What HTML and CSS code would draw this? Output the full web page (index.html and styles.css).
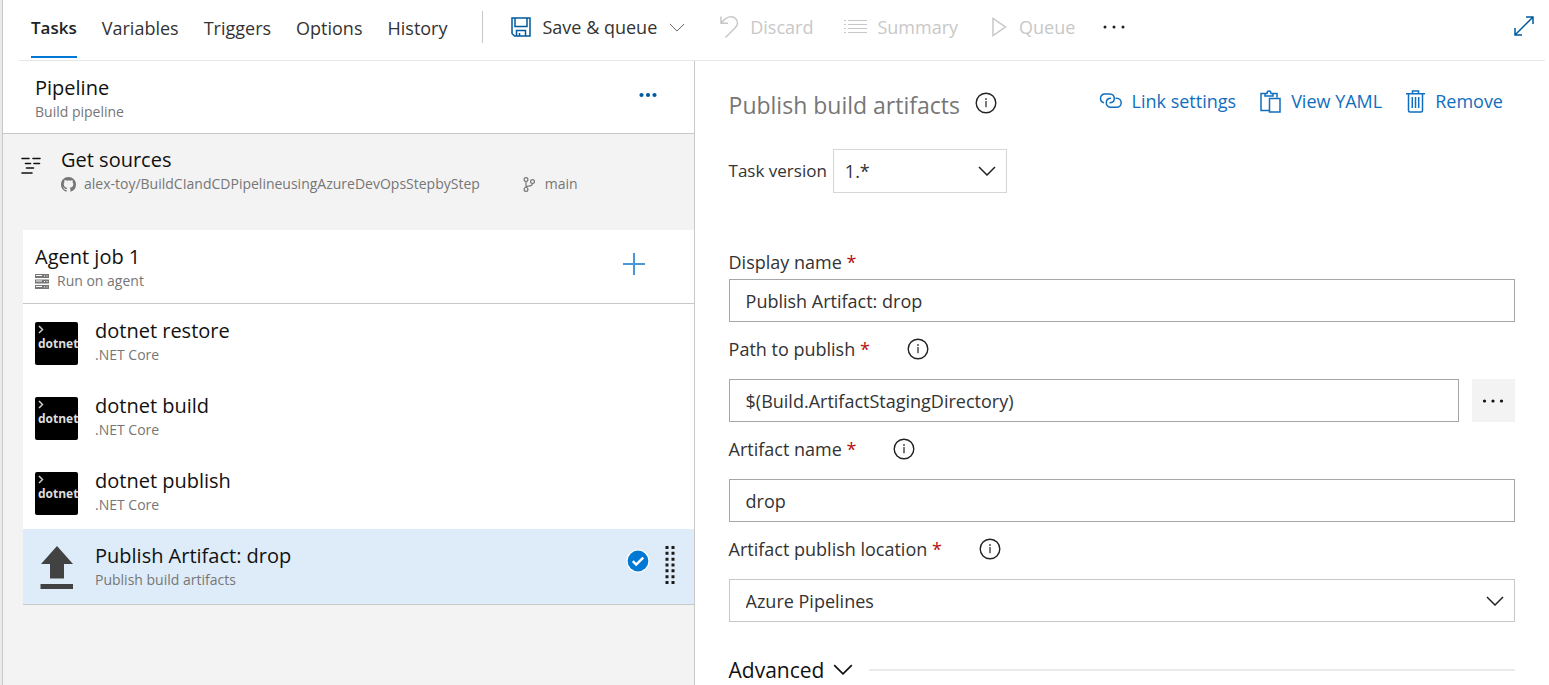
FILE: index.html
```html
<!DOCTYPE html>
<html lang="en">
<head>
<meta charset="utf-8">
<title>Build pipeline - Tasks</title>
<link rel="stylesheet" href="styles.css">
</head>
<body>
<svg class="defs" aria-hidden="true">
  <symbol id="chevron" viewBox="0 0 18 10"><path d="M1 1l8 8 8-8" fill="none" stroke="currentColor"/></symbol>
  <symbol id="info" viewBox="0 0 22 22"><circle cx="11" cy="11" r="9.8" fill="none" stroke="currentColor" stroke-width="1.4"/><path d="M10.4 9h1.200v6.300h-1.200zM10.200 6.200h1.600v1.500h-1.600z" fill="currentColor"/></symbol>
</svg>
<div class="app">
  <header class="topbar">
    <nav class="tabs">
      <a class="tab tab-active" href="#tasks">Tasks</a>
      <a class="tab" href="#variables">Variables</a>
      <a class="tab" href="#triggers">Triggers</a>
      <a class="tab" href="#options">Options</a>
      <a class="tab" href="#history">History</a>
    </nav>
    <div class="toolbar">
      <button class="tool save" type="button">
        <svg class="blue-dark" width="20" height="20" viewBox="0 0 20 20" fill="none" stroke="currentColor" stroke-width="1.5"><path d="M1 1h18v18H3.500L1 16.500z"/><path d="M4 1v8.500h12V1M5.500 19v-5.500h9V19M8.500 19v-3"/></svg>
        <span>Save &amp; queue</span>
        <svg class="thin-chevron" width="16" height="9"><use href="#chevron"/></svg>
      </button>
      <button class="tool discard" type="button" disabled>
        <svg width="20" height="24" viewBox="0 0 20 24" fill="none" stroke="currentColor" stroke-width="1.500"><path d="M2 1.500v6.800h7M2.500 8C5 4.500 8.200 1.800 12 1.800c4 0 6.500 3 6.500 6.200 0 2-1 3.500-2.500 5L6.500 22.500"/></svg>
        <span>Discard</span>
      </button>
      <button class="tool summary" type="button" disabled>
        <svg width="24" height="16" viewBox="0 0 24 16" fill="none" stroke="currentColor" stroke-width="1.200"><path d="M0 1.500h2M0 5.500h2M0 9.500h2M0 13.500h2M4 1.500h19M4 5.500h19M4 9.500h19M4 13.500h19"/></svg>
        <span>Summary</span>
      </button>
      <button class="tool queue" type="button" disabled>
        <svg width="15" height="20" viewBox="0 0 15 20" fill="none" stroke="currentColor" stroke-width="1.500"><path d="M1 1.500v17L13.500 10z"/></svg>
        <span>Queue</span>
      </button>
      <button class="tool more" type="button" aria-label="More actions">
        <svg width="22" height="4" viewBox="0 0 22 4" fill="currentColor"><circle cx="2" cy="2" r="1.500"/><circle cx="11" cy="2" r="1.500"/><circle cx="20" cy="2" r="1.500"/></svg>
      </button>
    </div>
    <button class="tool expand" type="button" aria-label="Full screen">
      <svg class="blue-dark" width="20" height="20" viewBox="0 0 20 20" fill="none" stroke="currentColor" stroke-width="1.500"><path d="M1 19L19 1M12 1h7v7M1 12v7h7"/></svg>
    </button>
  </header>
  <div class="panes">
    <section class="left">
      <div class="pipeline">
        <div>
          <h2 class="name">Pipeline</h2>
          <p class="sub">Build pipeline</p>
        </div>
        <button class="bare blue-dark" type="button" aria-label="Pipeline actions">
          <svg width="18" height="6" viewBox="0 0 18 6" fill="currentColor"><circle cx="2.500" cy="3" r="2.100"/><circle cx="9" cy="3" r="2.100"/><circle cx="15.500" cy="3" r="2.100"/></svg>
        </button>
      </div>
      <div class="sources">
        <svg class="sources-icon" width="20" height="18" viewBox="0 0 20 18" fill="none" stroke="#111" stroke-width="1.600" stroke-linecap="round"><path d="M1 1.500h7M12 1.500h7M4.500 6.500h5M13 6.500h5.500M5.500 11h7M1 16h10"/></svg>
        <div>
          <h2 class="name">Get sources</h2>
          <p class="sub source-line">
            <svg width="15" height="15" viewBox="0 0 16 16" fill="currentColor"><path d="M8 0C3.580 0 0 3.580 0 8c0 3.540 2.290 6.530 5.470 7.590.4.070.55-.17.55-.38 0-.19-.01-.82-.01-1.490-2.010.37-2.530-.49-2.690-.94-.09-.23-.48-.94-.82-1.130-.28-.15-.68-.52-.01-.53.630-.01 1.080.58 1.230.82.720 1.210 1.870.87 2.330.66.070-.52.280-.87.510-1.070-1.780-.2-3.640-.89-3.640-3.950 0-.87.310-1.590.82-2.150-.08-.2-.36-1.020.08-2.120 0 0 .67-.21 2.200.82.640-.18 1.320-.27 2-.27s1.360.09 2 .27c1.530-1.040 2.200-.82 2.200-.82.440 1.100.16 1.920.08 2.120.51.560.82 1.270.82 2.150 0 3.070-1.870 3.750-3.650 3.950.29.250.54.730.54 1.480 0 1.070-.01 1.930-.01 2.200 0 .21.150.46.550.38A8.010 8.010 0 0016 8c0-4.420-3.580-8-8-8z"/></svg>
            <span>alex-toy/BuildCIandCDPipelineusingAzureDevOpsStepbyStep</span>
            <span class="branch"><svg width="12" height="15" viewBox="0 0 12 15" fill="none" stroke="currentColor" stroke-width="1.200"><circle cx="3" cy="2.600" r="1.900"/><circle cx="3" cy="12.400" r="1.900"/><circle cx="9.500" cy="4.600" r="1.900"/><path d="M3 4.500v6M9.500 6.500C9.500 8.800 7 9 5 9.200 3.800 9.400 3 10 3 10.800"/></svg><span>main</span></span>
          </p>
        </div>
      </div>
      <div class="job-card">
        <div class="job">
          <div>
            <h2 class="name">Agent job 1</h2>
            <p class="sub agent-line">
              <svg width="14" height="15" viewBox="0 0 14 15"><path d="M0 0h14v4H0zM0 5.500h14v4H0zM0 11h14v4H0z" fill="#767676"/><path d="M1 1.500h6M1 7h6M1 12.500h6M9.500 1.500v1M12 1.500v1M9.500 7v1M12 7v1M9.500 12.500v1M12 12.500v1" stroke="#fff"/></svg>
              <span>Run on agent</span>
            </p>
          </div>
          <button class="bare add" type="button" aria-label="Add a task">
            <svg width="22" height="22" viewBox="0 0 22 22" stroke="#4c96da" stroke-width="2"><path d="M11 0v22M0 11h22"/></svg>
          </button>
        </div>
        <ul class="tasks">
          <li class="task">
            <svg class="task-icon" width="43" height="43" viewBox="0 0 43 43"><rect width="43" height="43" rx="2" fill="#000"/><path d="M4 4l3.500 3.500L4 11" fill="none" stroke="#ccc" stroke-width="1.500"/><text class="icon-text" x="3" y="26">dotnet</text></svg>
            <div><h3 class="name">dotnet restore</h3><p class="sub">.NET Core</p></div>
          </li>
          <li class="task">
            <svg class="task-icon" width="43" height="43" viewBox="0 0 43 43"><rect width="43" height="43" rx="2" fill="#000"/><path d="M4 4l3.500 3.500L4 11" fill="none" stroke="#ccc" stroke-width="1.500"/><text class="icon-text" x="3" y="26">dotnet</text></svg>
            <div><h3 class="name">dotnet build</h3><p class="sub">.NET Core</p></div>
          </li>
          <li class="task">
            <svg class="task-icon" width="43" height="43" viewBox="0 0 43 43"><rect width="43" height="43" rx="2" fill="#000"/><path d="M4 4l3.500 3.500L4 11" fill="none" stroke="#ccc" stroke-width="1.500"/><text class="icon-text" x="3" y="26">dotnet</text></svg>
            <div><h3 class="name">dotnet publish</h3><p class="sub">.NET Core</p></div>
          </li>
          <li class="task task-selected">
            <svg class="task-icon" width="43" height="43" viewBox="0 0 43 43" fill="#424242"><path d="M22 -1L38 17H29V31.500H15V17H6zM5.500 37h32.500v5H5.500z"/></svg>
            <div><h3 class="name">Publish Artifact: drop</h3><p class="sub">Publish build artifacts</p></div>
            <div class="marks">
              <svg class="check" width="24" height="24" viewBox="0 0 24 24"><circle cx="12" cy="12" r="11.500" fill="#fff"/><circle cx="12" cy="12" r="10.400" fill="#0078d4"/><path d="M6.800 12.200l3.400 3.400 7-7" fill="none" stroke="#fff" stroke-width="2.500"/></svg>
              <svg width="10" height="38" viewBox="0 0 10 38" stroke="#1a1a1a" stroke-width="3"><path d="M2 0v38M8 0v38" stroke-dasharray="3 2.830"/></svg>
            </div>
          </li>
        </ul>
      </div>
    </section>
    <section class="right">
      <div class="title-row">
        <h1 class="title">Publish build artifacts</h1>
        <svg class="info" width="22" height="22"><use href="#info"/></svg>
        <div class="links">
          <a class="link" href="#link">
            <svg width="23" height="16" viewBox="0 0 23 16" fill="none" stroke="currentColor" stroke-width="1.500"><path d="M5 9.800A4.500 4.500 0 0 1 5.200 1h5.800a4.300 4.300 0 0 1 4.300 4.500c0 2.300-1.600 4.300-4.800 4.300"/><path d="M16.500 5.300h1.200a4.500 4.500 0 0 1 0 9h-6a4.300 4.300 0 0 1-4.400-4.500c0-2.500 1.800-4.500 4.700-4.500"/></svg>
            <span>Link settings</span>
          </a>
          <a class="link" href="#yaml">
            <svg width="21" height="23" viewBox="0 0 21 23" fill="none" stroke="currentColor" stroke-width="1.500"><path d="M9 20.500H1V3.500h4M13 3.500h4v4M5 6V3.500h2C7 2 8 1 9 1s2 1 2 2.500h2V6zM9.500 8.500h10.500v13.500H9.500z"/></svg>
            <span>View YAML</span>
          </a>
          <a class="link" href="#remove">
            <svg width="19" height="23" viewBox="0 0 19 23" fill="none" stroke="currentColor" stroke-width="1.500"><path d="M0 3.800h19M6.500 3.500V1h6v2.500M2.500 4v16.500q0 1.500 1.500 1.500h11q1.500 0 1.500-1.500V4M6.300 7v11M9.500 7v11M12.700 7v11"/></svg>
            <span>Remove</span>
          </a>
        </div>
      </div>
      <div class="version">
        <label for="version">Task version</label>
        <div class="select-wrap version-select">
          <select id="version" class="control"><option>1.*</option></select>
          <svg class="chevron" width="18" height="10"><use href="#chevron"/></svg>
        </div>
      </div>
      <form class="form">
        <div class="field field-first">
          <div class="label-row"><label for="display">Display name <span class="req">*</span></label></div>
          <input id="display" class="control" type="text" value="Publish Artifact: drop">
        </div>
        <div class="field">
          <div class="label-row"><label for="path">Path to publish <span class="req">*</span></label><svg class="info" width="22" height="22"><use href="#info"/></svg></div>
          <div class="input-row">
            <input id="path" class="control" type="text" value="$(Build.ArtifactStagingDirectory)">
            <button class="browse" type="button" aria-label="Browse">
              <svg width="22" height="4" viewBox="0 0 22 4" fill="currentColor"><circle cx="2.500" cy="2" r="1.600"/><circle cx="11" cy="2" r="1.600"/><circle cx="19.500" cy="2" r="1.600"/></svg>
            </button>
          </div>
        </div>
        <div class="field">
          <div class="label-row"><label for="artifact">Artifact name <span class="req">*</span></label><svg class="info" width="22" height="22"><use href="#info"/></svg></div>
          <input id="artifact" class="control" type="text" value="drop">
        </div>
        <div class="field">
          <div class="label-row"><label for="location">Artifact publish location <span class="req">*</span></label><svg class="info" width="22" height="22"><use href="#info"/></svg></div>
          <div class="select-wrap">
            <select id="location" class="control"><option>Azure Pipelines</option></select>
            <svg class="chevron" width="18" height="10"><use href="#chevron"/></svg>
          </div>
        </div>
      </form>
      <div class="advanced">
        <button class="bare advanced-toggle" type="button"><span>Advanced</span><svg class="chevron-large" width="20" height="11"><use href="#chevron"/></svg></button>
        <span class="rule"></span>
      </div>
    </section>
  </div>
</div>
</body>
</html>
```
FILE: styles.css
```css
* { box-sizing: border-box; }
body {
  margin: 0;
  background: #fff;
  color: #333;
  font: 18px/24px "Open Sans", "Noto Sans", sans-serif;
}
h1, h2, h3, p, ul { margin: 0; padding: 0; font-weight: 400; list-style: none; }
button, input, select { font: inherit; color: inherit; }
a { text-decoration: none; color: inherit; }
svg { flex: none; overflow: visible; }
.defs { display: none; }
.app {
  min-height: 100vh;
  display: flex;
  flex-direction: column;
  border-left: 2px solid #eaeaea;
  box-shadow: inset 1px 0 #c8c8c8;
  padding-left: 1px;
}
.topbar {
  display: flex;
  height: 61px;
  margin: 0 4px 0 16px;
  border-bottom: 1px solid #e6e6e6;
}
.tabs { display: flex; gap: 25px; padding-left: 12px; }
.tab { height: 58px; padding-top: 16px; }
.tab-active { font-size: 17px; font-weight: 600; color: #222; border-bottom: 2px solid #0078d4; }
.toolbar {
  display: flex;
  align-items: center;
  height: 32px;
  margin: 11px 0 0 34px;
  padding-left: 28px;
  border-left: 1px solid #c8c8c8;
}
.tool, .bare { display: flex; align-items: center; padding: 0; border: 0; background: none; white-space: nowrap; }
.tool:disabled { color: #c8c8c8; }
.save { gap: 12px; }
.discard { gap: 11px; margin-left: 34px; }
.summary { gap: 9px; margin-left: 31px; }
.queue { gap: 12px; margin-left: 34px; }
.more { margin-left: 28px; color: #222; }
.blue-dark { color: #005a9e; }
.thin-chevron { color: #555; }
.expand { height: 52px; margin-left: auto; padding-right: 11px; }
.panes { flex: 1; display: grid; grid-template-columns: 45fr 55.600fr; }
.left { background: #f3f3f3; border-right: 1px solid #c8c8c8; }
.left, .right { min-width: 0; }
.pipeline {
  display: flex;
  justify-content: space-between;
  height: 73px;
  padding: 13px 37px 0 32px;
  background: #fff;
  border-bottom: 1px solid #c8c8c8;
}
.pipeline .bare { height: 42px; }
.name { font-size: 20px; line-height: 28px; color: #111; }
.sub { font-size: 14px; line-height: 20px; color: #767676; }
.sources { display: flex; gap: 20px; height: 96px; padding: 12px 0 0 18px; }
.sources-icon { margin-top: 11px; }
.source-line, .agent-line { display: flex; align-items: center; gap: 8px; }
.branch { display: flex; align-items: center; gap: 10px; margin-left: 35px; }
.job-card { margin-left: 20px; background: #fff; border-bottom: 1px solid #c8c8c8; }
.job {
  display: flex;
  justify-content: space-between;
  height: 74px;
  padding: 13px 49px 0 12px;
  border-bottom: 1px solid #c8c8c8;
}
.add { height: 42px; }
.task { display: flex; height: 75px; padding: 13px 19px 0 12px; gap: 17px; }
.task-selected { background: #deecf9; }
.task-icon { margin-top: 5px; }
.icon-text { font: 700 12px "Open Sans", sans-serif; fill: #ddd; }
.marks { display: flex; align-items: center; gap: 15px; height: 46px; margin-left: auto; }
.check { margin-bottom: 8px; }
.right { padding: 0 34px 0 34px; }
.title-row { display: flex; align-items: center; height: 88px; }
.title { font-size: 23px; line-height: 30px; color: #767676; }
.info { color: #222; }
.title-row .info { margin: 0 0 4px 15px; }
.links { display: flex; gap: 24px; margin-left: auto; padding: 0 12px 8px 0; }
.link { display: flex; align-items: center; gap: 10px; color: #106ebe; white-space: nowrap; }
.version { display: flex; align-items: center; gap: 6px; }
.version > label { font-size: 17px; }
.version-select { width: 174px; }
.version-select .control { height: 44px; padding-left: 11px; border-color: #d6d6d6; }
.select-wrap { display: grid; align-items: center; }
.select-wrap > * { grid-area: 1 / 1; }
.select-wrap .chevron { justify-self: end; margin-right: 11px; pointer-events: none; }
.chevron { color: #222; stroke-width: 1.500; }
.control {
  appearance: none;
  width: 100%;
  height: 43px;
  padding: 0 16px;
  border: 1px solid #a6a6a6;
  border-radius: 0;
  background: #fff;
  outline: 0;
}
select.control { border-color: #c8c8c8; }
.form { padding-top: 40px; }
.label-row { display: flex; align-items: center; gap: 37px; height: 57px; padding-bottom: 3px; }
.field-first .label-row { height: 46px; padding-bottom: 0; padding-top: 11px; }
.req { color: #b50e0e; }
.input-row { display: flex; gap: 13px; }
.browse {
  flex: none;
  display: flex;
  align-items: center;
  justify-content: center;
  width: 43px;
  height: 43px;
  padding: 0;
  border: 0;
  background: #f3f3f3;
  color: #111;
}
.advanced { display: flex; align-items: center; gap: 16px; height: 63px; padding-top: 32px; }
.advanced-toggle { gap: 9px; font-size: 21px; line-height: 30px; color: #111; }
.chevron-large { stroke-width: 1.500; }
.rule { flex: 1; height: 2px; background: #eaeaea; }
```
